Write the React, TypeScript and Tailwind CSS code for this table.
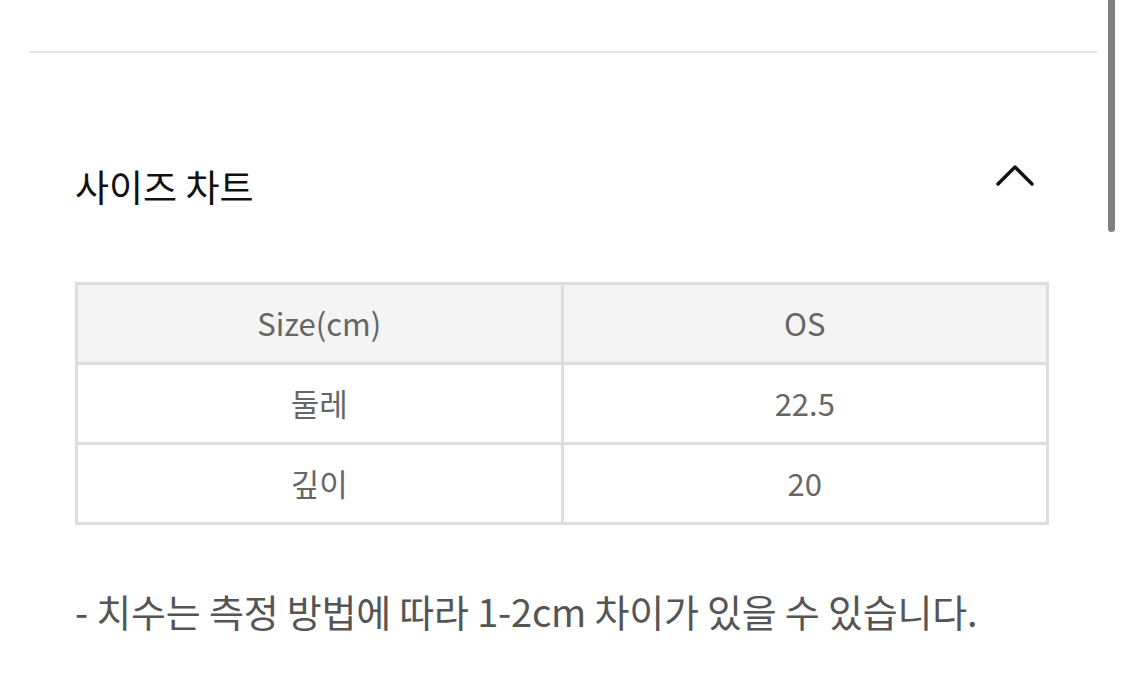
const rows = [
  { label: "Size(cm)", value: "OS", head: true },
  { label: "둘레", value: "22.5", head: false },
  { label: "깊이", value: "20", head: false },
];

export default function App() {
  return (
    <div
      className="relative h-[684px] w-full overflow-hidden bg-white"
      style={{ fontFamily: '"Noto Sans CJK KR", "Noto Sans", sans-serif' }}
    >
      {/* top divider */}
      <div className="pt-[51px] pl-[29px] pr-[28px]">
        <div className="h-[2px] bg-[#e6e6e6]" />
      </div>

      <section className="pl-[75px] pr-[76px]">
        {/* header */}
        <div className="mt-[103px] flex items-center justify-between">
          <h2 className="text-[37px] leading-[60px] text-[#111111]">사이즈 차트</h2>
          <svg width="40" height="24" viewBox="0 0 40 24" className="mr-[14px] -mt-[20px]" fill="none">
            <polyline points="3,20 20,3 37,20" stroke="#111111" strokeWidth="3.4" strokeLinecap="round" strokeLinejoin="round" />
          </svg>
        </div>

        {/* size table */}
        <table className="mt-[66px] w-full table-fixed border-collapse border-[3px] border-[#dddddd] text-center text-[31px] text-[#666666]">
          <tbody>
            {rows.map((r) => (
              <tr key={r.label} className={r.head ? "bg-[#f4f4f4]" : "bg-white"}>
                <td className="h-[80px] border-[3px] border-[#dddddd] align-middle">{r.label}</td>
                <td className="h-[80px] border-[3px] border-[#dddddd] align-middle">{r.value}</td>
              </tr>
            ))}
          </tbody>
        </table>

        <p className="mt-[62px] text-[38px] leading-[48px] tracking-[-0.2px] text-[#555555]">
          - 치수는 측정 방법에 따라 1-2cm 차이가 있을 수 있습니다.
        </p>
      </section>

      {/* scrollbar */}
      <div className="absolute right-[10px] top-0 h-[232px] w-[7px] rounded-b-full bg-[#808080]" />
    </div>
  );
}
